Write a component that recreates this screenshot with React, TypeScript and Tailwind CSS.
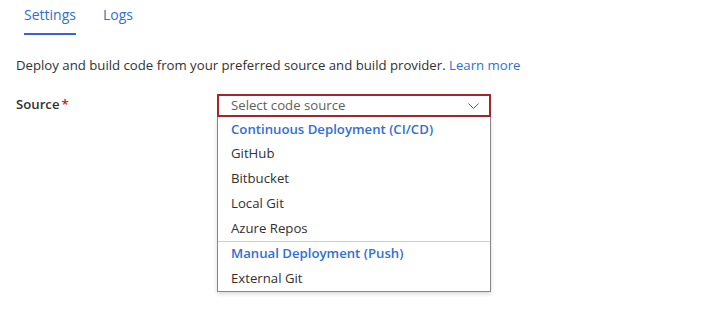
import { useState } from "react";

const font = { fontFamily: '"Segoe UI", "Open Sans", "Noto Sans", sans-serif' };

const groups = [
  { title: "Continuous Deployment (CI/CD)", items: ["GitHub", "Bitbucket", "Local Git", "Azure Repos"] },
  { title: "Manual Deployment (Push)", items: ["External Git"] },
];

export default function App() {
  const [tab, setTab] = useState("settings");

  return (
    <div className="w-[720px] h-[317px] bg-white text-[#323130] text-[13.2px] overflow-hidden" style={font}>
      {/* Tabs */}
      <div className="flex gap-[27px] px-6 h-9">
        {[
          { id: "settings", label: "Settings" },
          { id: "logs", label: "Logs" },
        ].map((t) => (
          <button
            key={t.id}
            onClick={() => setTab(t.id)}
            className={
              "h-[35px] pb-[4px] text-[14px] text-[#2f6fd6] " +
              (tab === t.id ? "border-b-2 border-[#3b5fd9]" : "border-b-2 border-transparent")
            }
          >
            {t.label}
          </button>
        ))}
      </div>

      <p className="px-4 mt-[20px] leading-[18px]">
        Deploy and build code from your preferred source and build provider.{" "}
        <a className="text-[#2f6fd6]">Learn more</a>
      </p>

      {/* Source row */}
      <div className="flex mt-[20px] px-4">
        <div className="w-[201px] pt-[1px] font-semibold leading-[18px]">
          Source<span className="text-[#c50f1f] ml-[2px]">*</span>
        </div>
        <div className="w-[274px]">
          <div className="h-[23px] border-2 border-[#a4262c] flex items-center pl-[12px] pr-[10px]">
            <span className="flex-1 text-[#605e5c]">Select code source</span>
            <svg width="11" height="6" viewBox="0 0 11 6" fill="none">
              <polyline points="0.5,0.5 5.5,5.5 10.5,0.5" stroke="#605e5c" strokeWidth="1" />
            </svg>
          </div>
          <div className="border border-t-0 border-[#8a8886] bg-white shadow-[0_2px_4px_rgba(0,0,0,0.15)]">
            {groups.map((g, gi) => (
              <div key={g.title} className={gi > 0 ? "border-t border-[#c8d0e0]" : ""}>
                <div className="h-[24.5px] pt-[1px] flex items-center pl-[13px] font-semibold text-[#2f6fd6]">
                  {g.title}
                </div>
                {g.items.map((it) => (
                  <div key={it} className="h-[24.75px] pt-[1px] flex items-center pl-[13px]">
                    {it}
                  </div>
                ))}
              </div>
            ))}
          </div>
        </div>
      </div>
    </div>
  );
}
